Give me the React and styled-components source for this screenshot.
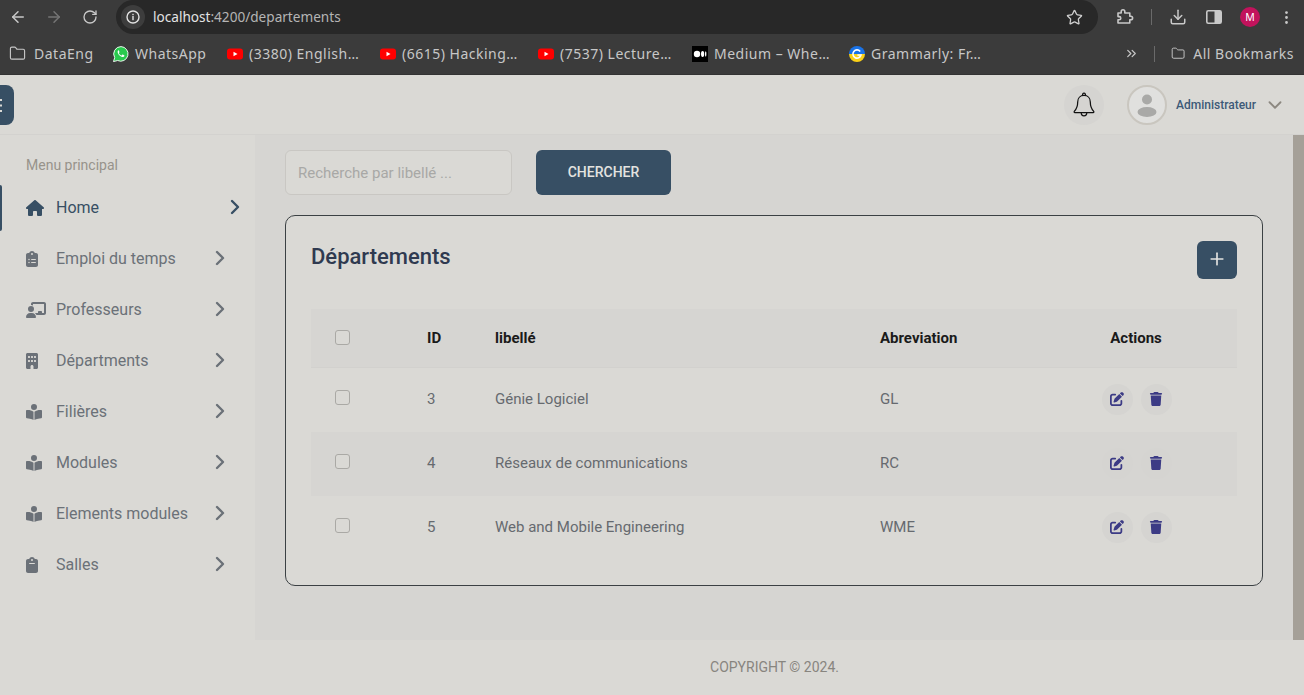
import React from 'react';
import styled, { createGlobalStyle } from 'styled-components';
import { ArrowLeft, ArrowRight, RotateCw, Star, Download, ChevronRight, ChevronDown, ChevronsRight, Plus, EllipsisVertical, Folder } from 'lucide-react';
import { FaHouse, FaClipboardList, FaChalkboardUser, FaBuilding, FaBookOpenReader, FaClipboard, FaPenToSquare, FaTrash } from 'react-icons/fa6';

const Global = createGlobalStyle`
  html, body { margin: 0; padding: 0; height: 695px; overflow: hidden; background: #dad9d5; }
  * { box-sizing: border-box; }
  #root { height: 695px; }
`;

const Page = styled.div`
  width: 1304px; height: 695px; display: flex; flex-direction: column;
  font-family: Roboto, sans-serif; overflow: hidden;
`;
const AddressRow = styled.div`
  height: 34px; background: #3b3b3b; display: flex; align-items: center; color: #c9c9c9;
`;
const NavButton = styled.span`
  width: 36px; display: flex; justify-content: center; color: ${p => p.$dim ? '#757575' : '#c9c9c9'};
`;
const Omnibox = styled.div`
  margin-left: 8px; width: 982px; height: 34px; background: #282828; border-radius: 17px;
  display: flex; align-items: center; padding: 0 15px 0 5px;
  font-family: "Noto Sans", sans-serif; font-size: 13.6px; color: #e3e3e3;
`;
const InfoBubble = styled.span`
  width: 24px; height: 24px; border-radius: 50%; background: #3d3d3d; display: flex; align-items: center; justify-content: center; margin-right: 8px;
`;
const Url = styled.span`
  flex: 1; padding-bottom: 1px;
  & em { font-style: normal; color: #b5b5b5; }
`;
const ToolIcons = styled.div`
  display: flex; align-items: center; flex: 1; padding-left: 18px; color: #c9c9c9;
`;
const Separator = styled.span`
  width: 1px; height: 16px; background: #6a6a6a; margin: ${p => p.$m || '0 17px 0 17px'};
`;
const DownloadSlot = styled.span`
  display: flex; margin-right: 19px;
`;
const Avatar = styled.span`
  width: 20px; height: 20px; border-radius: 50%; background: #c2135c; color: #fff; font-size: 10.5px;
  display: flex; align-items: center; justify-content: center; margin-left: 18px; font-family: "Noto Sans", sans-serif;
`;
const MenuDots = styled.span`
  display: flex; margin-left: 18px; margin-right: 8px;
`;
const BookmarksRow = styled.div`
  height: 41px; background: #3b3b3b; display: flex; align-items: center; padding: 0 10px 1px 9px; border-bottom: 1px solid #333;
  font-family: "Noto Sans", sans-serif; font-size: 14px; letter-spacing: 0.5px; color: #c7c7c7;
`;
const Bookmark = styled.span`
  display: flex; align-items: center; gap: ${p => p.$gap || 6}px; width: ${p => p.$w}px; flex: none; white-space: nowrap;
`;
const Spring = styled.span` flex: 1; `;

const AppBar = styled.header`
  height: 60px; background: #dad9d5; display: flex; align-items: center; flex: none; border-bottom: 1px solid #d3d2cf;
`;
const ToggleButton = styled.button`
  width: 40px; height: 40px; margin-left: -26px; border: 0; border-radius: 8px; background: #374f64; padding: 0 0 0 26px; display: flex; align-items: center; color: #dad9d5;
`;
const AppBarRight = styled.div`
  margin-left: auto; display: flex; align-items: center; padding-right: 18px;
`;
const BellCircle = styled.div`
  width: 40px; height: 40px; border-radius: 50%; background: #d5d4d1; display: flex; align-items: center; justify-content: center; color: #111;
`;
const UserCircle = styled.div`
  width: 40px; height: 40px; margin-left: 23px; border-radius: 50%; border: 2px solid #c9c6bf; background: #e0e0de;
  display: flex; align-items: center; justify-content: center; overflow: hidden;
`;
const UserName = styled.span`
  margin-left: 9px; font-size: 12px; font-weight: 500; color: #3d5a78; width: 88px;
`;

const Body = styled.div` flex: 1; display: flex; min-height: 0; `;
const Side = styled.aside`
  width: 255px; flex: none; background: #dad9d5; padding-top: 22px;
`;
const SideTitle = styled.div`
  font-size: 14px; line-height: 16px; color: #97938b; padding-left: 26px; margin-bottom: 9px;
`;
const SideItem = styled.div`
  position: relative; height: 51px; display: flex; align-items: center; padding-left: 26px;
  color: ${p => p.$active ? '#374f64' : '#6b7178'}; font-size: 16px;
  ${p => p.$active && `&::before { content: ''; position: absolute; left: 0; top: 3px; width: 2px; height: 46px; border-radius: 0 2px 2px 0; background: #374f64; }`}
`;
const SideIcon = styled.span`
  width: 30px; display: flex; align-items: center; flex: none;
  & svg { margin-left: ${p => p.$inset || 0}px; }
`;
const SideLabel = styled.span` flex: 1; `;
const SideChevron = styled.span`
  display: flex; width: 24px; margin-bottom: 2px; margin-right: ${p => p.$active ? '8px' : '23px'};
`;

const Right = styled.div` flex: 1; display: flex; flex-direction: column; min-width: 0; `;
const Columns = styled.div` flex: 1; display: flex; min-height: 0; `;
const Content = styled.main`
  flex: 1; background: #d6d5d2; padding: 15px 30px 0 30px; min-width: 0;
`;
const ScrollTrack = styled.div` width: 11px; background: #a5a098; flex: none; `;
const SearchRow = styled.div` display: flex; gap: 24px; height: 45px; `;
const SearchInput = styled.div`
  width: 227px; height: 45px; border: 1px solid #c9c7c3; border-radius: 6px; background: #dad9d5;
  display: flex; align-items: center; padding-left: 12px; font-size: 15px; color: #a8a8a6;
`;
const SearchButton = styled.button`
  width: 135px; height: 45px; border: 0; border-radius: 6px; background: #374f64; color: #e3e3e0;
  font: 500 14px Roboto, sans-serif; padding: 0 0 1px;
`;
const Card = styled.section`
  margin-top: 20px; width: 978px; height: 371px; border: 1px solid #3c4144; border-radius: 10px; background: #dad9d5; padding: 25px 25px 0;
`;
const CardHead = styled.div` display: flex; justify-content: space-between; height: 68px; `;
const CardTitle = styled.h2`
  margin: 0; font: 500 22px/32px Roboto, sans-serif; color: #2f3a50;
`;
const AddButton = styled.button`
  width: 40px; height: 38px; border: 0; border-radius: 6px; background: #374f64; color: #e3e3e0; display: flex; align-items: center; justify-content: center; padding: 0 0 3px;
`;
const Row = styled.div`
  display: grid; grid-template-columns: 116px 68px 385px 155px 202px; align-items: center;
  height: ${p => p.$head ? '59px' : '64px'}; font-size: 15px; color: #666a6f;
  padding-bottom: ${p => p.$head ? '0' : '2px'};
  background: ${p => p.$shade ? '#d6d5d2' : 'transparent'};
  ${p => p.$head && `font-weight: 700; color: #1a1a1a; border-bottom: 1px solid #d2d1ce;`}
`;
const CheckCell = styled.div`
  padding-left: 24px; display: flex; transform: translateY(${p => p.$head ? '-1px' : '-2px'});
`;
const Checkbox = styled.span`
  width: 15px; height: 15px; border: 1px solid #aaa9a5; border-radius: 3px; background: #dad9d5; display: block;
`;
const ActionsHead = styled.div` text-align: center; `;
const Actions = styled.div` display: flex; justify-content: center; gap: 8px; padding-left: 1px; `;
const ActionBtn = styled.span`
  width: 31px; height: 31px; border-radius: 50%; background: #d5d4d1; color: #3c3b85; display: flex; align-items: center; justify-content: center;
`;
const Footer = styled.footer`
  height: 55px; flex: none; background: #dad9d5; text-align: center; font-size: 14px; color: #88857f; padding-top: 19px; padding-right: 10px;
`;

const YouTube = () => (
  <svg width="16" height="16" viewBox="0 0 16 16"><rect x="0" y="2.5" width="16" height="11" rx="3" fill="#f00"/><path d="M6.5 5.7 10.5 8l-4 2.3z" fill="#fff"/></svg>
);
const Medium = () => (
  <svg width="16" height="16" viewBox="0 0 16 16"><rect width="16" height="16" fill="#000"/><circle cx="5" cy="8" r="3.2" fill="#fff"/><ellipse cx="10.6" cy="8" rx="1.6" ry="3" fill="#fff"/><ellipse cx="13.7" cy="8" rx=".7" ry="2.7" fill="#fff"/></svg>
);
const Grammarly = () => (
  <svg width="16" height="16" viewBox="0 0 16 16"><path d="M0 8a8 8 0 0 1 16 0z" fill="#1a73e8"/><path d="M0 8a8 8 0 0 0 16 0z" fill="#fbd117"/><path d="M11.2 5.4A4.1 4.1 0 1 0 12 9H8.4" fill="none" stroke="#fff" strokeWidth="1.6"/></svg>
);
const WhatsApp = () => (
  <svg width="16" height="16" viewBox="0 0 16 16">
    <path d="M8 .6a7.3 7.3 0 0 0-6.3 11L.5 15.6l4.1-1.1A7.3 7.3 0 1 0 8 .6z" fill="#29c94e" stroke="#fff" strokeWidth=".9"/>
    <path d="M5.6 4.3c-.3 0-.8.4-.9 1-.2 1.1.4 2.6 1.6 3.9 1.3 1.3 2.8 2 3.9 1.8.7-.1 1.2-.7 1.2-1.2 0-.3 0-.4-.2-.5l-1.5-.7c-.2-.1-.4 0-.5.1l-.6.7c-.1.1-.3.2-.5.1-1-.5-1.8-1.2-2.3-2.2-.1-.2 0-.3.1-.4l.5-.6c.1-.1.1-.3 0-.5l-.6-1.4c-.1-.1-.2-.2-.4-.2z" fill="#fff"/>
  </svg>
);
const Puzzle = () => (
  <svg width="18" height="18" viewBox="0 0 18 18" fill="none" stroke="#c9c9c9" strokeWidth="1.6" strokeLinejoin="round"><path d="M2.5 5.5h3.2V4a1.8 1.8 0 0 1 3.6 0v1.5h5v3.2h1a1.8 1.8 0 0 1 0 3.6h-1v3.2h-11.8v-3.2h1.2a1.6 1.6 0 0 0 0-3.2H2.5z" transform="translate(-.5 -.5)"/></svg>
);
const SidePanel = () => (
  <svg width="16" height="14" viewBox="0 0 16 14"><rect x=".8" y=".8" width="14.4" height="12.4" rx="1.5" fill="none" stroke="#c9c9c9" strokeWidth="1.6"/><rect x="8.5" y="1" width="6.5" height="12" fill="#c9c9c9"/></svg>
);
const InfoIcon = () => (
  <svg width="14" height="14" viewBox="0 0 14 14"><circle cx="7" cy="7" r="6" fill="none" stroke="#e3e3e3" strokeWidth="1.4"/><rect x="6.3" y="6" width="1.4" height="4.2" fill="#e3e3e3"/><rect x="6.3" y="3.8" width="1.4" height="1.4" fill="#e3e3e3"/></svg>
);
const Person = () => (
  <svg width="30" height="30" viewBox="0 0 30 30"><circle cx="15" cy="9.5" r="5" fill="#a9a9a7"/><ellipse cx="15" cy="22" rx="9.5" ry="5" fill="#a9a9a7"/></svg>
);
const MenuGlyph = () => (
  <svg width="2" height="14" viewBox="0 0 2 14"><g fill="#dad9d5"><rect y="1" width="2" height="2"/><rect y="6.5" width="2" height="2"/><rect y="12" width="2" height="2"/></g></svg>
);
const Bell = () => (
  <svg width="22" height="25" viewBox="0 0 22 25" fill="none" stroke="#111" strokeWidth="1.25" strokeLinejoin="round">
    <path d="M11 3.4c-3.9 0-6.3 2.9-6.3 6.6 0 4.8-1.1 6.9-3.4 9.4-.4.5-.1 1.1.5 1.1h18.4c.6 0 .9-.6.5-1.1-2.3-2.5-3.4-4.6-3.4-9.4 0-3.7-2.4-6.6-6.3-6.6z"/>
    <path d="M9.6 3.6c-.2-1.6.3-2.6 1.4-2.6s1.6 1 1.4 2.6"/>
    <path d="M8.2 20.6c0 2 1.2 3.3 2.8 3.3s2.8-1.3 2.8-3.3"/>
  </svg>
);

const bookmarks = [
  { w: 104, gap: 8, icon: <Folder size={17} strokeWidth={1.6} />, label: 'DataEng' },
  { w: 114, icon: <WhatsApp />, label: 'WhatsApp' },
  { w: 153, icon: <YouTube />, label: '(3380) English…' },
  { w: 158, icon: <YouTube />, label: '(6615) Hacking…' },
  { w: 154, icon: <YouTube />, label: '(7537) Lecture…' },
  { w: 157, icon: <Medium />, label: 'Medium – Whe…' },
  { w: 140, icon: <Grammarly />, label: 'Grammarly: Fr…' },
];

const menu = [
  { label: 'Home', Icon: FaHouse, size: 18, active: true },
  { label: 'Emploi du temps', Icon: FaClipboardList, size: 16, inset: -2 },
  { label: 'Professeurs', Icon: FaChalkboardUser, size: 20 },
  { label: 'Départments', Icon: FaBuilding, size: 16, inset: -2 },
  { label: 'Filières', Icon: FaBookOpenReader, size: 16 },
  { label: 'Modules', Icon: FaBookOpenReader, size: 16 },
  { label: 'Elements modules', Icon: FaBookOpenReader, size: 16 },
  { label: 'Salles', Icon: FaClipboard, size: 16, inset: -2 },
];

const rows = [
  { id: 3, name: 'Génie Logiciel', abbr: 'GL' },
  { id: 4, name: 'Réseaux de communications', abbr: 'RC', shade: true },
  { id: 5, name: 'Web and Mobile Engineering', abbr: 'WME' },
];

export default function App() {
  return (
    <Page>
      <Global />
      <AddressRow>
        <NavButton><ArrowLeft size={18} /></NavButton>
        <NavButton $dim><ArrowRight size={18} /></NavButton>
        <NavButton><RotateCw size={16} /></NavButton>
        <Omnibox>
          <InfoBubble><InfoIcon /></InfoBubble>
          <Url>localhost<em>:4200/departements</em></Url>
          <Star size={17} strokeWidth={1.8} color="#d0d0d0" />
        </Omnibox>
        <ToolIcons>
          <Puzzle />
          <Separator />
          <DownloadSlot><Download size={18} /></DownloadSlot>
          <SidePanel />
          <Avatar>M</Avatar>
          <MenuDots><EllipsisVertical size={17} /></MenuDots>
        </ToolIcons>
      </AddressRow>
      <BookmarksRow>
        {bookmarks.map(b => (
          <Bookmark key={b.label} $w={b.w} $gap={b.gap}>{b.icon}{b.label}</Bookmark>
        ))}
        <Spring />
        <ChevronsRight size={15} />
        <Separator $m="0 16px 0 15px" />
        <Bookmark $w={123} $gap={8}><Folder size={17} strokeWidth={1.6} />All Bookmarks</Bookmark>
      </BookmarksRow>
      <AppBar>
        <ToggleButton aria-label="menu"><MenuGlyph /></ToggleButton>
        <AppBarRight>
          <BellCircle><Bell /></BellCircle>
          <UserCircle><Person /></UserCircle>
          <UserName>Administrateur</UserName>
          <ChevronDown size={22} color="#8c8880" />
        </AppBarRight>
      </AppBar>
      <Body>
        <Side>
          <SideTitle>Menu principal</SideTitle>
          {menu.map(({ label, Icon, size, active, inset }) => (
            <SideItem key={label} $active={active}>
              <SideIcon $inset={inset}><Icon size={size} /></SideIcon>
              <SideLabel>{label}</SideLabel>
              <SideChevron $active={active}><ChevronRight size={24} strokeWidth={2.4} /></SideChevron>
            </SideItem>
          ))}
        </Side>
        <Right>
          <Columns>
            <Content>
              <SearchRow>
                <SearchInput>Recherche par libellé ...</SearchInput>
                <SearchButton>CHERCHER</SearchButton>
              </SearchRow>
              <Card>
                <CardHead>
                  <CardTitle>Départements</CardTitle>
                  <AddButton aria-label="ajouter"><Plus size={20} strokeWidth={2} /></AddButton>
                </CardHead>
                <Row $head $shade>
                  <CheckCell $head><Checkbox /></CheckCell>
                  <div>ID</div>
                  <div>libellé</div>
                  <div>Abreviation</div>
                  <ActionsHead>Actions</ActionsHead>
                </Row>
                {rows.map(r => (
                  <Row key={r.id} $shade={r.shade}>
                    <CheckCell><Checkbox /></CheckCell>
                    <div>{r.id}</div>
                    <div>{r.name}</div>
                    <div>{r.abbr}</div>
                    <Actions>
                      <ActionBtn><FaPenToSquare size={14} /></ActionBtn>
                      <ActionBtn><FaTrash size={14} /></ActionBtn>
                    </Actions>
                  </Row>
                ))}
              </Card>
            </Content>
            <ScrollTrack />
          </Columns>
          <Footer>COPYRIGHT © 2024.</Footer>
        </Right>
      </Body>
    </Page>
  );
}
